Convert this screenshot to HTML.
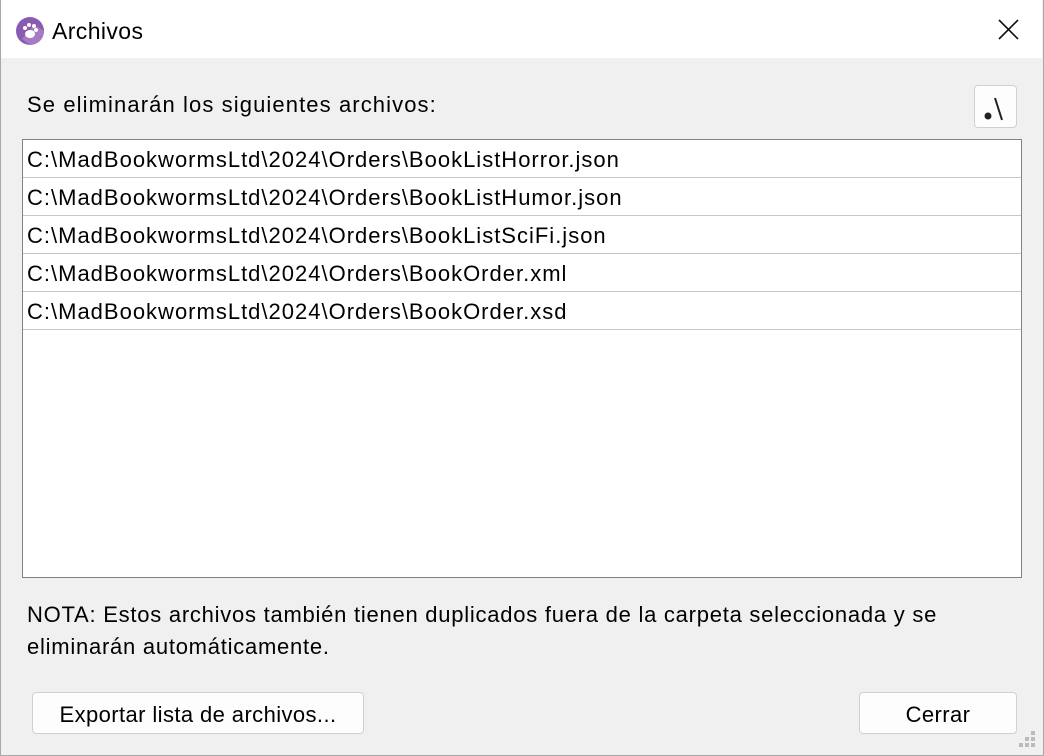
<!DOCTYPE html>
<html><head><meta charset="utf-8"><style>
*{margin:0;padding:0;box-sizing:border-box}
body{width:1044px;height:756px;background:#f0f0f0;font-family:"Liberation Sans",sans-serif;color:#000;position:relative;overflow:hidden;letter-spacing:0.4px}
.title{position:absolute;left:0;top:0;width:1042px;height:58px;background:#fff}
.edge{position:absolute;left:0;top:0;width:1044px;height:756px;border:1px solid #a8a8a8;border-top:none;pointer-events:none}
.t{position:absolute;font-size:22px;white-space:nowrap}
.list{position:absolute;left:22px;top:139px;width:1000px;height:439px;background:#fff;border:1px solid #828282}
.row{height:38px;border-bottom:1px solid #c8c8c8;font-size:22px;line-height:39px;padding-left:4px;white-space:nowrap;letter-spacing:1px}
.btn{position:absolute;background:#fdfdfd;border:1px solid #d0d0d0;border-radius:4px;font-size:22px;text-align:center}
</style></head><body>
<div class="title"></div>
<svg style="position:absolute;left:16px;top:17px" width="28" height="28" viewBox="0 0 28 28"><circle cx="14" cy="14" r="14" fill="#8a5bb0"/><path d="M14 28A14 14 0 0 0 28 14L18 8 6 22Z" fill="#a57bc6"/><ellipse cx="14" cy="17" rx="5" ry="4" fill="#fff"/><circle cx="9" cy="11" r="2" fill="#fff"/><circle cx="13" cy="8" r="2" fill="#fff"/><circle cx="18" cy="9" r="2" fill="#fff"/><circle cx="20" cy="13" r="2" fill="#fff"/></svg>
<div class="t" style="left:52px;top:18px;font-size:23px">Archivos</div>
<svg style="position:absolute;left:998px;top:19px" width="21" height="21"><path d="M1 1L20 20M20 1L1 20" stroke="#111" stroke-width="1.6"/></svg>
<div class="t" style="left:27px;top:92px;letter-spacing:1.1px">Se eliminarán los siguientes archivos:</div>
<div class="btn" style="left:974px;top:85px;width:43px;height:43px"><svg width="43" height="43" style="position:absolute;left:-1px;top:-1px"><circle cx="14" cy="31" r="3.5" fill="#222"/><path d="M21 13L28 35" stroke="#222" stroke-width="2"/></svg></div>
<div class="list">
<div class="row">C:\MadBookwormsLtd\2024\Orders\BookListHorror.json</div>
<div class="row">C:\MadBookwormsLtd\2024\Orders\BookListHumor.json</div>
<div class="row">C:\MadBookwormsLtd\2024\Orders\BookListSciFi.json</div>
<div class="row">C:\MadBookwormsLtd\2024\Orders\BookOrder.xml</div>
<div class="row">C:\MadBookwormsLtd\2024\Orders\BookOrder.xsd</div>
</div>
<div class="t" style="left:27px;top:599px;line-height:32px;letter-spacing:0.75px">NOTA: Estos archivos también tienen duplicados fuera de la carpeta seleccionada y se<br>eliminarán automáticamente.</div>
<div class="btn" style="left:32px;top:692px;width:332px;height:42px;line-height:44px">Exportar lista de archivos...</div>
<div class="btn" style="left:859px;top:692px;width:158px;height:42px;line-height:44px">Cerrar</div>
<svg style="position:absolute;left:1019px;top:731px" width="20" height="20" fill="#bbb"><rect x="12" y="0" width="4" height="4"/><rect x="6" y="6" width="4" height="4"/><rect x="12" y="6" width="4" height="4"/><rect x="0" y="12" width="4" height="4"/><rect x="6" y="12" width="4" height="4"/><rect x="12" y="12" width="4" height="4"/></svg>
<div class="edge"></div>
</body></html>
